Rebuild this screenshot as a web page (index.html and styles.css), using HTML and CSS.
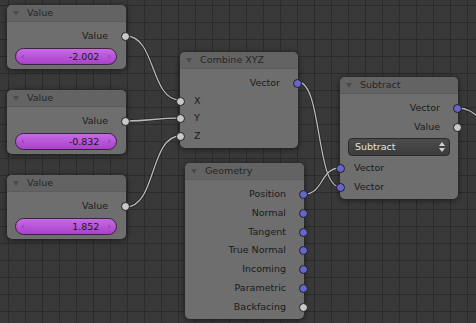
FILE: index.html
```html
<!DOCTYPE html>
<html lang="en">
<head>
  <meta charset="UTF-8" />
  <meta name="viewport" content="width=device-width, initial-scale=1.0"/>
  <title>Node Editor</title>
  <link rel="stylesheet" href="styles.css">
</head>
<body>
  <div class="editor">
    <svg class="links" width="476" height="323" viewBox="0 0 476 323">
      <g class="link-shadow">
        <path d="M126,36 C156,36 150,100 180,100" />
        <path d="M126,121 C152,121 154,118 180,118" />
        <path d="M126,207 C156,207 150,136 180,136" />
        <path d="M298,82 C322,82 316,187 340,187" />
        <path d="M304,194 C324,194 320,168 340,168" />
        <path d="M458,108 C470,108 474,114 490,126" />
      </g>
      <g class="link">
        <path d="M126,36 C156,36 150,100 180,100" />
        <path d="M126,121 C152,121 154,118 180,118" />
        <path d="M126,207 C156,207 150,136 180,136" />
        <path d="M298,82 C322,82 316,187 340,187" />
        <path d="M304,194 C324,194 320,168 340,168" />
        <path d="M458,108 C470,108 474,114 490,126" />
      </g>
    </svg>

    <!-- value nodes -->
    <div class="node node-value1">
      <div class="node-header"><span class="tri"></span>Value</div>
      <div class="node-body">
        <div class="row out">Value<span class="socket float"></span></div>
        <div class="field"><span class="arr">&lsaquo;</span><span class="num">-2.002</span><span class="arr">&rsaquo;</span></div>
      </div>
    </div>

    <div class="node node-value2">
      <div class="node-header"><span class="tri"></span>Value</div>
      <div class="node-body">
        <div class="row out">Value<span class="socket float"></span></div>
        <div class="field"><span class="arr">&lsaquo;</span><span class="num">-0.832</span><span class="arr">&rsaquo;</span></div>
      </div>
    </div>

    <div class="node node-value3">
      <div class="node-header"><span class="tri"></span>Value</div>
      <div class="node-body">
        <div class="row out">Value<span class="socket float"></span></div>
        <div class="field"><span class="arr">&lsaquo;</span><span class="num">1.852</span><span class="arr">&rsaquo;</span></div>
      </div>
    </div>

    <!-- combine -->
    <div class="node node-combine">
      <div class="node-header"><span class="tri"></span>Combine XYZ</div>
      <div class="node-body tight">
        <div class="row out">Vector<span class="socket vec"></span></div>
        <div class="row in"><span class="socket float"></span>X</div>
        <div class="row in"><span class="socket float"></span>Y</div>
        <div class="row in"><span class="socket float"></span>Z</div>
      </div>
    </div>

    <!-- geometry -->
    <div class="node node-geometry">
      <div class="node-header"><span class="tri"></span>Geometry</div>
      <div class="node-body">
        <div class="row out">Position<span class="socket vec"></span></div>
        <div class="row out">Normal<span class="socket vec"></span></div>
        <div class="row out">Tangent<span class="socket vec"></span></div>
        <div class="row out">True Normal<span class="socket vec"></span></div>
        <div class="row out">Incoming<span class="socket vec"></span></div>
        <div class="row out">Parametric<span class="socket vec"></span></div>
        <div class="row out">Backfacing<span class="socket float"></span></div>
      </div>
    </div>

    <!-- subtract -->
    <div class="node node-subtract">
      <div class="node-header"><span class="tri"></span>Subtract</div>
      <div class="node-body">
        <div class="row out">Vector<span class="socket vec"></span></div>
        <div class="row out">Value<span class="socket float"></span></div>
        <div class="dropdown">Subtract
          <svg class="updown" width="6" height="10" viewBox="0 0 6 10">
            <path d="M0,4 L3,0 L6,4 Z M0,6 L3,10 L6,6 Z" fill="#d0d0d0"/>
          </svg>
        </div>
        <div class="row in"><span class="socket vec"></span>Vector</div>
        <div class="row in"><span class="socket vec"></span>Vector</div>
      </div>
    </div>
  </div>
</body>
</html>
```

FILE: styles.css
```css
html, body {
  margin: 0;
  padding: 0;
}
body {
  font-family: 'DejaVu Sans', sans-serif;
  font-size: 9.5px;
  width: 476px;
  height: 323px;
  overflow: hidden;
}
.editor {
  position: relative;
  width: 476px;
  height: 323px;
  background-color: #393939;
  background-image:
    linear-gradient(to right, #2c2c2c 1px, transparent 1px),
    linear-gradient(to bottom, #2c2c2c 1px, transparent 1px);
  background-size: 17px 17px;
  background-position: 8px 5px;
}
.links {
  position: absolute;
  left: 0;
  top: 0;
  z-index: 0;
  pointer-events: none;
}
.links path {
  fill: none;
}
.link-shadow path {
  stroke: rgba(0, 0, 0, 0.35);
  stroke-width: 3;
}
.link path {
  stroke: #b8b8b8;
  stroke-width: 1.3;
}

.node {
  position: absolute;
  z-index: 1;
  background: #6e6e6e;
  border-radius: 5px;
  box-shadow: 0 1px 6px rgba(0, 0, 0, 0.6);
  color: #1a1a1a;
}
.node-value1 { left: 7px; top: 5px; width: 119px; }
.node-value2 { left: 7px; top: 90px; width: 119px; }
.node-value3 { left: 7px; top: 175px; width: 119px; }
.node-combine { left: 180px; top: 52px; width: 118px; }
.node-geometry { left: 185px; top: 163px; width: 119px; }
.node-subtract { left: 340px; top: 77px; width: 118px; }

.node-header {
  height: 16px;
  line-height: 16px;
  background: #636363;
  border-bottom: 1px solid #5c5c5c;
  border-radius: 5px 5px 0 0;
  padding-left: 20px;
  position: relative;
  color: #262626;
}
.tri {
  position: absolute;
  left: 6px;
  top: 6px;
  width: 0;
  height: 0;
  border-left: 3px solid transparent;
  border-right: 3px solid transparent;
  border-top: 5px solid #4c4c4c;
}

.node-body {
  display: flex;
  flex-direction: column;
  gap: 2.8px;
  padding: 6px 0 4px;
}
.node-body.tight {
  gap: 1.5px;
}
.row {
  position: relative;
  height: 16px;
  line-height: 16px;
  display: flex;
  align-items: center;
}
.row.out {
  justify-content: flex-end;
  padding-right: 18px;
}
.row.in {
  padding-left: 14px;
}
.socket {
  position: absolute;
  top: 4px;
  width: 7px;
  height: 7px;
  border-radius: 50%;
  border: 0.5px solid #1e1e1e;
}
.row.out .socket { right: -4px; }
.row.in .socket { left: -4px; }
.socket.float { background: #c8c8c8; }
.socket.vec { background: #6565cc; }

.field {
  margin: 1px 9px 0 8px;
  height: 15px;
  border: 1px solid #3a2342;
  border-radius: 9px;
  background: linear-gradient(to bottom, #c76ae6, #a842c8);
  display: flex;
  align-items: center;
  padding: 0 5px;
  color: #1a1a1a;
}
.field .num {
  flex: 1;
  text-align: right;
  padding-right: 8px;
}
.field .arr {
  color: #8a3aa4;
  font-size: 9px;
}

.dropdown {
  margin: 0 8px 2px;
  height: 16px;
  border: 1px solid #2a2a2a;
  border-radius: 4px;
  background: linear-gradient(to bottom, #4c4c4c, #3c3c3c);
  color: #e2e2e2;
  display: flex;
  align-items: center;
  justify-content: space-between;
  padding: 0 4px 0 6px;
}
.updown {
  display: block;
}
```
